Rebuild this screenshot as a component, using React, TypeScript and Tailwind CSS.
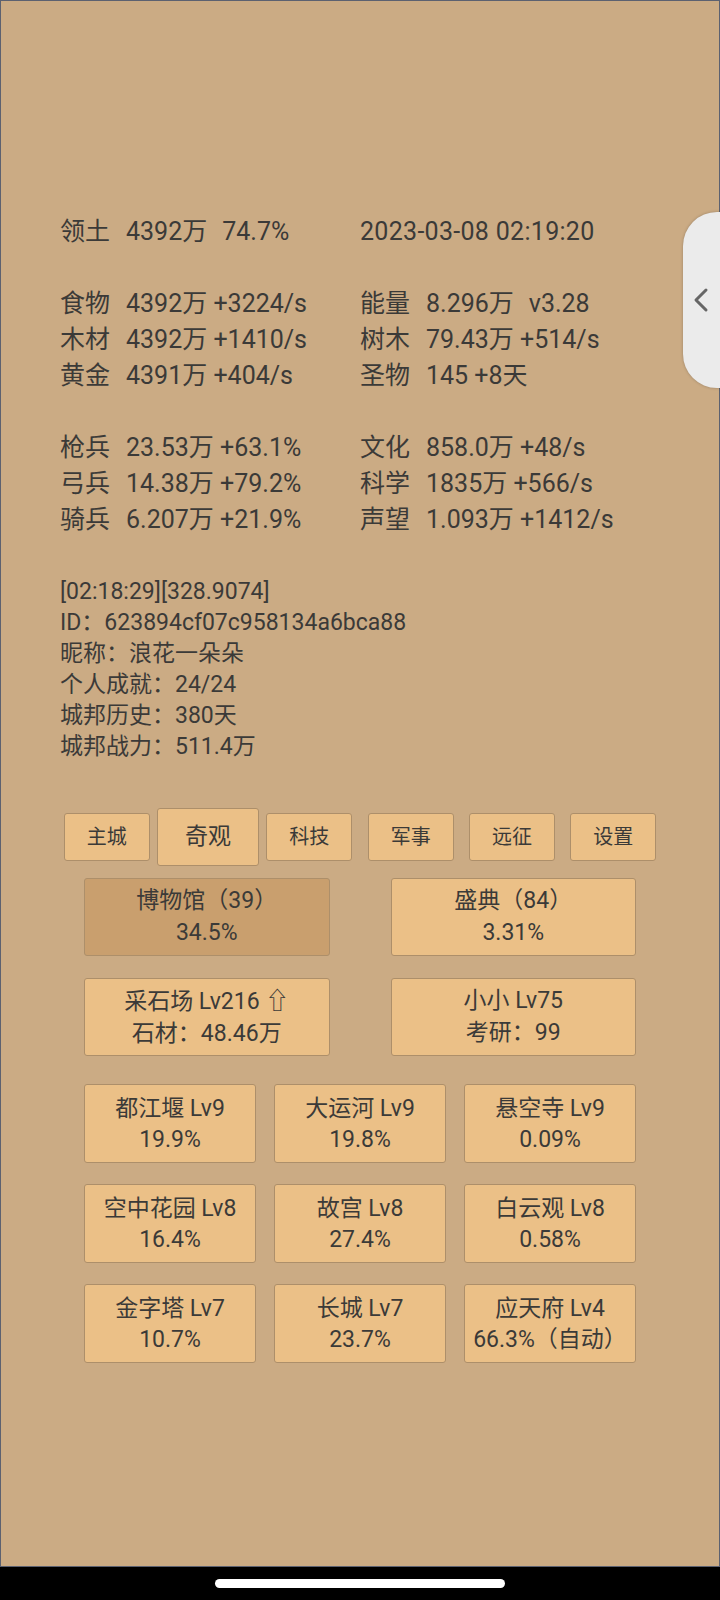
const font = { fontFamily: 'Roboto, "Noto Sans CJK SC", sans-serif' };

type Stat = { label?: string; value: string; extra?: string; track?: boolean };

const groups: [Stat, Stat][][] = [
  [[{ label: "领土", value: "4392万", extra: "74.7%" }, { value: "2023-03-08 02:19:20", track: true }]],
  [
    [{ label: "食物", value: "4392万 +3224/s" }, { label: "能量", value: "8.296万", extra: "v3.28" }],
    [{ label: "木材", value: "4392万 +1410/s" }, { label: "树木", value: "79.43万 +514/s" }],
    [{ label: "黄金", value: "4391万 +404/s" }, { label: "圣物", value: "145 +8天" }],
  ],
  [
    [{ label: "枪兵", value: "23.53万 +63.1%" }, { label: "文化", value: "858.0万 +48/s" }],
    [{ label: "弓兵", value: "14.38万 +79.2%" }, { label: "科学", value: "1835万 +566/s" }],
    [{ label: "骑兵", value: "6.207万 +21.9%" }, { label: "声望", value: "1.093万 +1412/s" }],
  ],
];

const info = [
  "[02:18:29][328.9074]",
  "ID：623894cf07c958134a6bca88",
  "昵称：浪花一朵朵",
  "个人成就：24/24",
  "城邦历史：380天",
  "城邦战力：511.4万",
];

const tabs = ["主城", "奇观", "科技", "军事", "远征", "设置"];

const wonders = [
  ["都江堰 Lv9", "19.9%"],
  ["大运河 Lv9", "19.8%"],
  ["悬空寺 Lv9", "0.09%"],
  ["空中花园 Lv8", "16.4%"],
  ["故宫 Lv8", "27.4%"],
  ["白云观 Lv8", "0.58%"],
  ["金字塔 Lv7", "10.7%"],
  ["长城 Lv7", "23.7%"],
  ["应天府 Lv4", "66.3%（自动）"],
];

const StatCell = ({ label, value, extra, track }: Stat) => (
  <div className="flex gap-[16px] whitespace-pre">
    {label && <span>{label}</span>}
    <span className={track ? "tracking-[0.3px]" : ""}>
      {value}
      {extra && <span className="ml-[15px]">{extra}</span>}
    </span>
  </div>
);

const Card = ({ top, bottom, dark, tall }: { top: React.ReactNode; bottom: string; dark?: boolean; tall?: boolean }) => (
  <div
    className={`flex flex-col items-center justify-center rounded-[3px] border border-[#ad8f6a] text-[23px] whitespace-pre ${
      tall ? "h-[78px] leading-[32px]" : "h-[79px] leading-[31px]"
    } ${dark ? "bg-[#c99f6e]" : "bg-[#ebc087]"}`}
  >
    <div>{top}</div>
    <div>{bottom}</div>
  </div>
);

export default function App() {
  return (
    <div className="w-[720px] h-[1600px] flex flex-col bg-black text-[#3b3a38]" style={font}>
      <div className="relative h-[1567px] bg-[#cbab84] border border-[#5c6170] pt-[213px]">
        <div className="ml-[59px] text-[25px] leading-[36px]">
          {groups.map((rows, gi) => (
            <div key={gi} className={gi > 0 ? "mt-[36px]" : ""}>
              {rows.map(([l, r], ri) => (
                <div key={ri} className="grid grid-cols-[300px_300px]">
                  <StatCell {...l} />
                  <StatCell {...r} />
                </div>
              ))}
            </div>
          ))}
        </div>

        <div className="ml-[59px] mt-[38px] text-[23px] leading-[31px]">
          {info.map((t) => (
            <div key={t}>{t}</div>
          ))}
        </div>

        <div className="mx-[55px] mt-[46px] grid grid-cols-6 items-center justify-items-center">
          {tabs.map((t) => {
            const active = t === "奇观";
            return (
              <button
                key={t}
                className={`flex items-center justify-center rounded-[3px] border border-[#ad8f6a] bg-[#ebc087] ${
                  active ? "w-[102px] h-[58px] text-[23px]" : "w-[86px] h-[48px] text-[20px]"
                }`}
              >
                {t}
              </button>
            );
          })}
        </div>

        <div className="mx-[83px] mt-[12px] grid grid-cols-2 gap-x-[61px] gap-y-[22px]">
          <Card tall dark top="博物馆（39）" bottom="34.5%" />
          <Card tall top="盛典（84）" bottom="3.31%" />
          <Card tall top={<span>采石场 Lv216 <span className="text-[24px]">⇧</span></span>} bottom="石材：48.46万" />
          <Card tall top="小小 Lv75" bottom="考研：99" />
        </div>

        <div className="mx-[83px] mt-[28px] grid grid-cols-3 gap-x-[18px] gap-y-[21px]">
          {wonders.map(([a, b]) => (
            <Card key={a} top={a} bottom={b} />
          ))}
        </div>

        <div className="absolute right-[-1px] top-[211px] w-[37px] h-[176px] rounded-l-[34px] bg-[#ebebeb] shadow-[0_0_3px_rgba(0,0,0,0.25)] flex items-center justify-center">
          <svg width="18" height="26" viewBox="0 0 18 26" className="mr-[1px]">
            <polyline points="14,3 4,13 14,23" fill="none" stroke="#666666" strokeWidth="3" strokeLinecap="round" strokeLinejoin="round" />
          </svg>
        </div>
      </div>
      <div className="flex-1 flex items-center justify-center">
        <div className="w-[290px] h-[9px] rounded-full bg-white" />
      </div>
    </div>
  );
}
